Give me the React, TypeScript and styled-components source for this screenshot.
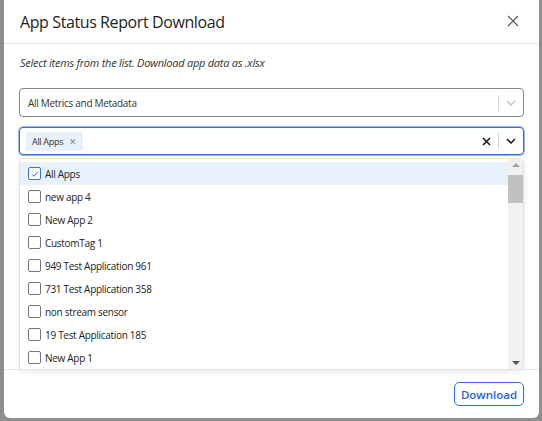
import React from 'react'
import styled, { createGlobalStyle } from 'styled-components'

const APPS = [
  'All Apps',
  'new app 4',
  'New App 2',
  'CustomTag 1',
  '949 Test Application 961',
  '731 Test Application 358',
  'non stream sensor',
  '19 Test Application 185',
  'New App 1',
]

const FONT = `'Open Sans', 'Noto Sans', sans-serif`

const GlobalStyle = createGlobalStyle`
  html, body {
    margin: 0;
    background: #8e8e8e;
    font-family: ${FONT};
    color: #242424;
  }
`

const Backdrop = styled.div`
  width: 542px;
  height: 421px;
  padding: 0 3px 0 4px;
  box-sizing: border-box;
  overflow: hidden;
`

const Modal = styled.div`
  width: 535px;
  height: 418px;
  background: #fff;
  border-radius: 0 0 6px 6px;
  display: flex;
  flex-direction: column;
`

const Header = styled.div`
  height: 43px;
  border-bottom: 1px solid #e6e6e6;
  display: flex;
  align-items: center;
  justify-content: space-between;
  padding: 0 18px 0 16px;
`

const Title = styled.h1`
  margin: 0;
  font-size: 16px;
  letter-spacing: -0.4px;
  font-weight: 400;
  color: #1e1e1e;
`

const CloseBtn = styled.button`
  border: none;
  background: none;
  padding: 0;
  width: 14px;
  height: 14px;
  display: flex;
  color: #555;
`

const Body = styled.div`
  flex: 1;
  padding: 10px 15px 0 15px;
  display: flex;
  flex-direction: column;
`

const Hint = styled.p`
  margin: 0 0 17px 1px;
  font-size: 11px;
  letter-spacing: -0.25px;
  font-style: italic;
  color: #333;
  line-height: 17px;
`

const SelectBox = styled.div<{ $focused?: boolean }>`
  height: ${p => (p.$focused ? 28 : 29)}px;
  box-sizing: border-box;
  border: 1px solid ${p => (p.$focused ? '#2c6fd6' : '#858585')};
  box-shadow: ${p => (p.$focused ? '0 0 0 0.5px #2c6fd6' : 'none')};
  border-radius: 4px;
  display: flex;
  align-items: center;
  padding-left: ${p => (p.$focused ? 6 : 8)}px;
  margin-bottom: ${p => (p.$focused ? 4 : 10)}px;
`

const Value = styled.div`
  flex: 1;
  font-size: 10px;
  letter-spacing: -0.3px;
  color: #333;
`

const Chip = styled.div`
  display: inline-flex;
  align-items: center;
  gap: 6px;
  background: #e7f0fb;
  border-radius: 2px;
  height: 19px;
  padding: 0 6px 0 6px;
  font-size: 9px;
  letter-spacing: -0.3px;
  color: #333;
`

const ChipX = styled.span`
  font-size: 8.5px;
  color: #888;
`

const Indicators = styled.div`
  display: flex;
  align-items: center;
  height: 100%;
`

const IconSlot = styled.div<{ $faded?: boolean }>`
  width: 24px;
  display: flex;
  justify-content: center;
  color: ${p => (p.$faded ? '#c8c8c8' : '#222')};
`

const Separator = styled.div`
  width: 1px;
  height: 16px;
  background: #d6d6d6;
`

const Menu = styled.div`
  height: 210px;
  margin-left: 1px;
  width: 503px;
  display: flex;
  background: #fff;
  border-radius: 3px;
  box-shadow: 0 0 0 1px rgba(0, 0, 0, 0.06), 0 2px 6px rgba(0, 0, 0, 0.12);
  overflow: hidden;
`

const List = styled.div`
  flex: 1;
  padding-top: 3px;
`

const Option = styled.div<{ $active?: boolean }>`
  height: 23px;
  display: flex;
  align-items: center;
  gap: 4px;
  padding-left: 8px;
  font-size: 10px;
  letter-spacing: -0.3px;
  color: #222;
  background: ${p => (p.$active ? '#e8f2fc' : 'transparent')};
`

const Box = styled.span<{ $checked?: boolean }>`
  width: 11px;
  height: 11px;
  border: 1px solid ${p => (p.$checked ? '#3a6fe0' : '#767676')};
  border-radius: 2px;
  background: #fff;
  display: flex;
  align-items: center;
  justify-content: center;
  color: #3a6fe0;
`

const Scrollbar = styled.div`
  width: 15px;
  background: #f1f1f1;
  display: flex;
  flex-direction: column;
  align-items: center;
  padding: 4px 0;
  box-sizing: border-box;
`

const Arrow = styled.div<{ $down?: boolean }>`
  width: 0;
  height: 0;
  border-left: 4px solid transparent;
  border-right: 4px solid transparent;
  ${p =>
    p.$down
      ? 'border-top: 4px solid #505050; margin-top: auto;'
      : 'border-bottom: 4px solid #a3a3a3;'}
`

const Thumb = styled.div`
  width: 15px;
  height: 28px;
  background: #c1c1c1;
  margin-top: 8px;
`

const Footer = styled.div`
  height: 48px;
  border-top: 1px solid #e6e6e6;
  display: flex;
  align-items: center;
  justify-content: flex-end;
  padding-right: 15px;
`

const DownloadBtn = styled.button`
  height: 24px;
  width: 70px;
  border: 1px solid #2d6cf0;
  border-radius: 5px;
  background: #fff;
  color: #1f5fd9;
  font-family: ${FONT};
  font-size: 11.5px;
  font-weight: 600;
  padding: 0;
`

function Check() {
  return (
    <svg width="8" height="8" viewBox="0 0 8 8">
      <path d="M1 4.3 L3 6.3 L7 1.5" fill="none" stroke="currentColor" strokeWidth="1" />
    </svg>
  )
}

function Chevron() {
  return (
    <svg width="10" height="6" viewBox="0 0 10 6">
      <path d="M1 1 L5 5 L9 1" fill="none" stroke="currentColor" strokeWidth="1.6" />
    </svg>
  )
}

export default function App() {
  return (
    <>
      <GlobalStyle />
      <Backdrop>
        <Modal>
          <Header>
            <Title>App Status Report Download</Title>
            <CloseBtn aria-label="close">
              <svg width="12" height="12" viewBox="0 0 12 12">
                <path d="M1 1 L11 11 M11 1 L1 11" stroke="currentColor" strokeWidth="1.1" />
              </svg>
            </CloseBtn>
          </Header>
          <Body>
            <Hint>Select items from the list. Download app data as .xlsx</Hint>
            <SelectBox>
              <Value>All Metrics and Metadata</Value>
              <Indicators>
                <Separator />
                <IconSlot $faded>
                  <Chevron />
                </IconSlot>
              </Indicators>
            </SelectBox>
            <SelectBox $focused>
              <Value>
                <Chip>
                  All Apps <ChipX>✕</ChipX>
                </Chip>
              </Value>
              <Indicators>
                <IconSlot>
                  <svg width="9" height="9" viewBox="0 0 9 9">
                    <path d="M1 1 L8 8 M8 1 L1 8" stroke="currentColor" strokeWidth="1.7" />
                  </svg>
                </IconSlot>
                <Separator />
                <IconSlot>
                  <Chevron />
                </IconSlot>
              </Indicators>
            </SelectBox>
            <Menu>
              <List>
                {APPS.map((name, i) => (
                  <Option key={name} $active={i === 0}>
                    <Box $checked={i === 0}>{i === 0 && <Check />}</Box>
                    {name}
                  </Option>
                ))}
              </List>
              <Scrollbar>
                <Arrow />
                <Thumb />
                <Arrow $down />
              </Scrollbar>
            </Menu>
          </Body>
          <Footer>
            <DownloadBtn>Download</DownloadBtn>
          </Footer>
        </Modal>
      </Backdrop>
    </>
  )
}
